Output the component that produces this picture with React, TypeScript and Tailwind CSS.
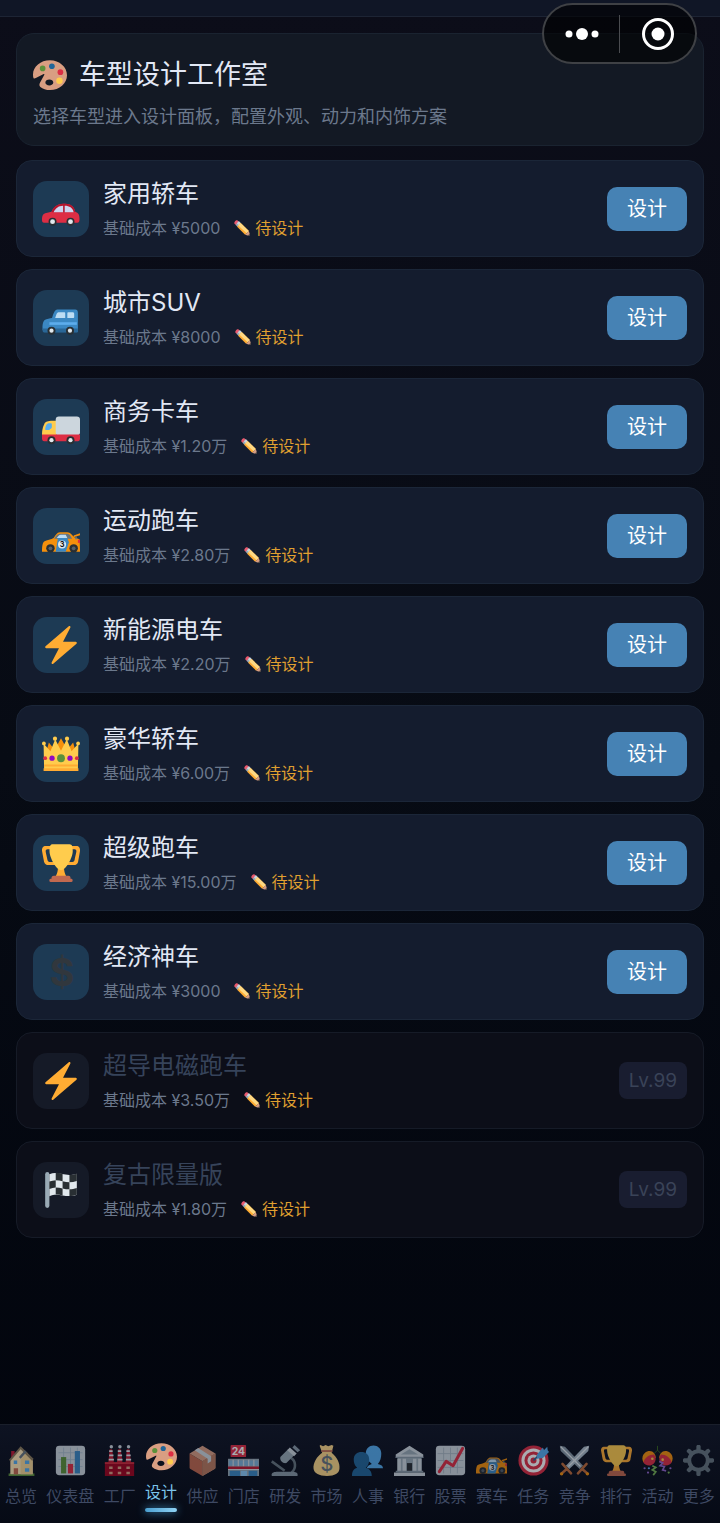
import type { ReactNode } from 'react';

type IconName =
  | 'palette' | 'car' | 'suv' | 'truck' | 'racecar' | 'bolt' | 'crown' | 'trophy' | 'dollar' | 'flag'
  | 'pencil' | 'house' | 'chart' | 'factory' | 'box' | 'shop' | 'microscope' | 'bag' | 'people' | 'bank'
  | 'stock' | 'target' | 'swords' | 'party' | 'gear';

// All icons are drawn on a 36x36 grid
const icons: Record<IconName, ReactNode> = {
  palette: (
    <>
      <path fillRule="evenodd" fill="#D99E82" d="M18 2.500C8 2.500 0 9.300 0 17.500c0 1.500.1 2.700.5 3.600.4 1 1.400.8 2.500.2L11.300 17c.6-.3 1 .1.7.8L7.500 26c-1 1.800-1 3.500.3 4.700 2.400 2 6.200 3.300 10.200 3.300 10 0 18-7 18-15.700S28 2.500 18 2.500zM17.300 22.800c2.300 0 4.200 1.400 4.200 3.100s-1.900 3.200-4.200 3.200-4.200-1.500-4.200-3.200 1.900-3.100 4.200-3.100z" />
      <circle cx="10.200" cy="11" r="3" fill="#5C913B" />
      <circle cx="20" cy="8.700" r="3" fill="#269" />
      <circle cx="29" cy="15" r="3" fill="#DD2E44" />
      <circle cx="28" cy="24" r="3.400" fill="#FFCC4D" />
    </>
  ),
  car: (
    <>
      <path fill="#DD2E44" d="M2 31c-1.500 0-2-1-2-2.500 0-3 .4-5.600 3-6.500 2-.7 4-1 6-1.500C11 16.500 14 13 20 13h2c5.500 0 8.500 3 9.500 7.500 3 .8 4 3 4 6v2c0 1.500-.7 2.500-2 2.500z" />
      <path fill="#B4152D" d="M9 20.500C11 16.500 14 13 20 13h2c5.500 0 8.500 3 9.500 7.500l-1.500.5H10z" />
      <path fill="#CCD6F0" d="M11 21c1.800-3.200 4.300-6 9-6v6zM21.500 15c4.500 0 7.500 2 8.500 6h-8.500z" />
      <circle cx="10" cy="30" r="3.800" fill="#292F33" /><circle cx="27" cy="30" r="3.800" fill="#292F33" />
      <circle cx="10" cy="30" r="2.300" fill="#E1E8ED" /><circle cx="27" cy="30" r="2.300" fill="#E1E8ED" />
    </>
  ),
  suv: (
    <>
      <path fill="#3B88C3" d="M1 30c-1-3-.6-8 1.500-10 2-1.200 5-1.500 7-2 1.500-4.500 2.500-8 5-8h17c1.600 0 2.500 1 2.500 3v17c0 1-.5 1.500-1.500 1.500H3C2 31.500 1.300 31 1 30z" />
      <path fill="#BDDDF4" d="M12.500 18c1-3.300 1.700-5.500 3-5.500H21c.6 0 1 .4 1 1V18zM24 13.500c0-.6.4-1 1-1h4c1 0 1.500.5 1.500 1.500v3c0 .6-.4 1-1 1H24z" />
      <path fill="#5DADEC" d="M7 22h26v2.500H7z" />
      <path fill="#2A6797" d="M0 28h34v3.500H1z" />
      <circle cx="9" cy="30" r="3.800" fill="#292F33" /><circle cx="26.500" cy="30" r="3.800" fill="#292F33" />
      <circle cx="9" cy="30" r="2" fill="#E1E8ED" /><circle cx="26.500" cy="30" r="2" fill="#E1E8ED" />
    </>
  ),
  truck: (
    <>
      <path fill="#FFCC4D" d="M0 25c0-4 1-9 3.500-11.500C5 12 8 12 14 12v14H0z" />
      <path fill="#55ACEE" d="M3 20c.4-2.500 1-5 3-5.500h2.500c.5 0 .8.300.8.8V18c0 1-.6 1.500-1.500 2l-1 .8H3.500c-.4 0-.6-.3-.5-.8z" />
      <rect x="13" y="8" width="23" height="18" rx="3" fill="#CCD6DD" />
      <path fill="#DD2E44" d="M0 25h36v4c0 1.500-.8 2.500-2 2.500H2C.8 31.500 0 30.500 0 29z" />
      <circle cx="9" cy="30.500" r="3.800" fill="#292F33" /><circle cx="27" cy="30.500" r="3.800" fill="#292F33" />
      <circle cx="9" cy="30.500" r="2" fill="#E1E8ED" /><circle cx="27" cy="30.500" r="2" fill="#E1E8ED" />
    </>
  ),
  racecar: (
    <>
      <path fill="#F4900C" d="M0 33c0-4 .3-8.500 2-9.800C4.500 21.800 9 21.500 11 20c2-2.500 3-5.500 6-5.500h7c3 0 5 3.500 7 5l4.500 1.500c.4 3 .5 8 .5 12z" />
      <path fill="#66757F" d="M11.500 20.500c2-2.500 3-4.700 5.500-4.700h7c2 0 3.200 2.400 4.500 4.700z" />
      <path fill="#BDDDF4" d="M14 20c1.400-2 2-3.200 4-3.200h4.500L24 20z" />
      <path fill="#3B88C3" d="M15 20h9l1.500 4-3 9H13z" />
      <path fill="#F4900C" d="M30 17.500l6-2v1.700l-6 2z" />
      <path fill="#66757F" d="M31.500 18.500h1.500V21h-1.500z" />
      <path fill="#DD2E44" d="M34 21.500h2v3h-2z" />
      <circle cx="8" cy="29.700" r="4" fill="#292F33" /><circle cx="30" cy="29.700" r="4" fill="#292F33" />
      <circle cx="8" cy="29.700" r="1.800" fill="#55606A" /><circle cx="30" cy="29.700" r="1.800" fill="#55606A" />
      <circle cx="19" cy="26" r="3.800" fill="#E1E8ED" />
      <text x="19" y="28.500" fontSize="7" fontWeight="700" textAnchor="middle" fill="#14171A">3</text>
    </>
  ),
  bolt: (
    <path fill="#FFAC33" d="M32.938 15.651C32.792 15.260 32.418 15 32 15H19.925L26.890 1.458c.219-.426.106-.947-.271-1.243C26.437.071 26.218 0 26 0c-.233 0-.466.082-.653.243L18 6.588 3.347 19.243c-.316.273-.43.714-.284 1.105S3.582 21 4 21h12.075L9.110 34.542c-.219.426-.106.947.271 1.243.182.144.401.215.619.215.233 0 .466-.082.653-.243L18 29.412l14.653-12.655c.317-.273.43-.714.285-1.106z" />
  ),
  crown: (
    <>
      <path fill="#F4900C" d="M4 16L6.500 7 12 14l6-11 6 11 5.500-7L32 16z" />
      <path fill="#FFCC4D" d="M2 33L1.500 8 8 15.500 12.500 4l5.500 11L23.500 4 28 15.500 34.500 8 34 33z" />
      <path fill="#FFAC33" d="M2 28h32v1.800H2zM1.500 31.500h33V34h-33z" />
      <g fill="#FFCC4D"><circle cx="1.800" cy="8" r="1.800" /><circle cx="12.300" cy="3.500" r="2" /><circle cx="23.700" cy="3.500" r="2" /><circle cx="34.200" cy="8" r="1.800" /></g>
      <circle cx="18" cy="22" r="3.700" fill="#5C913B" />
      <circle cx="9.500" cy="22" r="2.500" fill="#9209C1" /><circle cx="26.500" cy="22" r="2.500" fill="#9209C1" />
      <circle cx="3" cy="22" r="1.800" fill="#DD2E44" /><circle cx="33" cy="22" r="1.800" fill="#DD2E44" />
    </>
  ),
  trophy: (
    <>
      <path fill="#FFAC33" d="M5.123 5h6C12.227 5 13 4.896 13 6V4c0-1.104-.773-2-1.877-2h-8c-2 0-3.583 2.125-3 5 0 0 1.791 9.375 1.917 9.958C2.373 18.500 4.164 20 6.081 20h6.958c1.105 0-.039-1.896-.039-3v-2c0 1.104-.773 2-1.877 2h-4c-1.104 0-1.833-1.042-2-2S3.539 7.667 3.539 7.667C3.206 5.750 4.018 5 5.123 5zm25.812 0h-6C23.831 5 22 4.896 22 6V4c0-1.104 1.831-2 2.935-2h8c2 0 3.584 2.125 3 5 0 0-1.633 9.419-1.771 10-.354 1.500-2.042 3-4 3h-7.146C21.914 20 22 18.104 22 17v-2c0 1.104 1.831 2 2.935 2h4c1.104 0 1.834-1.042 2-2s1.584-7.333 1.584-7.333C32.851 5.750 32.040 5 30.935 5zM20.832 22c0-6.958-2.709 0-2.709 0s-3-6.958-3 0-3.291 10-3.291 10h12.292c-.001 0-3.292-3.042-3.292-10z" />
      <path fill="#FFCC4D" d="M29.123 6.577c0 6.775-6.770 18.192-11 18.192-4.231 0-11-11.417-11-18.192 0-5.195 1-6.319 3-6.319 1.374 0 6.025-.027 8-.027l7-.001c2.917-.001 4 .684 4 6.347z" />
      <path fill="#C1694F" d="M27 33c0 1.104.227 2-.877 2h-16C9.018 35 9 34.104 9 33v-1c0-1.104 1.164-2 2.206-2h13.917c1.042 0 1.877.896 1.877 2v1z" />
      <rect x="7" y="33" width="22" height="3" rx="1.300" fill="#C1694F" />
    </>
  ),
  dollar: <text x="19" y="31" fontSize="36" fontWeight="700" textAnchor="middle" fill="#31373D">$</text>,
  flag: (
    <>
      <rect x="3" y="1" width="4" height="34" rx="2" fill="#99AAB5" />
      <path fill="#E1E8ED" d="M7 3c9-3.500 15 3.500 26-.5v20c-11 4-17-3-26 1.500z" />
      <g fill="#292F33">
        <path d="M13 1.700c2.200 0 4.400.5 6.500 1v7c-2.200-.5-4.300-1-6.500-1zM26 3.700c2.300 0 4.600-.4 7-1.200v7c-2.400.7-4.700 1.200-7 1.200z" />
        <path d="M7 10c2-.8 4-1.200 6-1.300v7c-2 0-4 .5-6 1.400zM19.500 9.700c2.200.6 4.300 1 6.500 1v6.700c-2.200 0-4.300-.4-6.500-.9z" />
        <path d="M13 15.700c2.200 0 4.400.3 6.500.9v6.600c-2.100-.5-4.300-1-6.500-.9zM26 17.400c2.300 0 4.600-.5 7-1.300v6.400c-2.400.9-4.700 1.300-7 1.300z" />
      </g>
    </>
  ),
  pencil: (
    <>
      <path fill="#EA596E" d="M1 8C-.5 5 4-.5 7.500.5L12 5 5 12z" />
      <path fill="#99AAB5" d="M3.500 10.500l7.500-7.500 5 5-8 8z" />
      <path fill="#CCD6DD" d="M6.500 7.500l6.500 6 3-5.500-5-5z" />
      <path fill="#FFAC33" d="M7 15l8-8 18.500 18-8.500 8z" />
      <path fill="#FFD983" d="M9.500 12.500L15 7l18.500 18-5 5z" />
      <path fill="#D99E82" d="M33.500 25l2.500 9.500L34.500 36 25 33z" />
      <path fill="#292F33" d="M35 31.500l1 3-1.500 1.500-3-1z" />
    </>
  ),
  house: (
    <>
      <path fill="#5C913B" d="M3 33h30v3H3z" />
      <path fill="#BB1A34" d="M6 7h4v8H6z" />
      <path fill="#FFE8B6" d="M5 17L17 3l14 14v17H5z" />
      <path fill="#F5D595" d="M17 17l7-9 7 9v17H17z" />
      <path fill="#8A7A5C" d="M17 1.500L32 16l-1.500 2.500L17 5 5 19l-1.500-2z" />
      <path fill="#66757F" d="M15 14l7-8 2 2-7 8z" />
      <path fill="#55ACEE" d="M9 18h4v4H9zM22 18h5v4h-5zM22 27h5v4h-5z" />
      <path fill="#C1694F" d="M9 27h5v7H9z" />
    </>
  ),
  chart: (
    <>
      <rect x="1" y="1" width="34" height="34" rx="4" fill="#CCD6DD" />
      <path stroke="#A5BBCB" strokeWidth="1" fill="none" d="M4 9h28M4 17h28M4 25h28M10 3v30M18 3v30M26 3v30" />
      <path fill="#5C913B" d="M7 14h6v19H7z" /><path fill="#DD2E44" d="M15 22h6v11h-6z" /><path fill="#3B88C3" d="M23 7h6v26h-6z" />
    </>
  ),
  factory: (
    <>
      <path fill="#BE1931" d="M6.500 5h3l2 16H5zM16.500 5h3l2 16H15zM26.500 5h3l2 16H25z" />
      <path stroke="#E1E8ED" strokeWidth="2" d="M6 7h4M6 12h5M5.500 17h6M16 7h4M16 12h5M15.500 17h6M26 7h4M26 12h5M25.500 17h6" />
      <g fill="#CCD6DD"><circle cx="8.500" cy="2" r="2" /><circle cx="18.500" cy="2" r="2" /><circle cx="28.500" cy="2" r="2" /></g>
      <path fill="#A0041E" d="M1 20h34v16H1z" /><path fill="#D32F3F" d="M1 20h34v2H1z" />
      <path fill="#D99E82" d="M6 25h4v3H6zM16 25h4v3h-4zM26 25h4v3h-4zM6 31h4v3H6zM16 31h4v3h-4zM26 31h4v3h-4z" />
    </>
  ),
  box: (
    <>
      <path fill="#C1694F" d="M3 10l15 9v17L4 28c-.6-.4-1-1-1-2z" />
      <path fill="#D99E82" d="M33 10l-15 9v17l14-8c.6-.4 1-1 1-2z" />
      <path fill="#D99E82" d="M3 10L18 1l15 9-15 9z" />
      <path fill="#B97A5F" d="M33 10l-15 9v17l14-8c.6-.4 1-1 1-2z" />
      <path fill="#CCD6DD" d="M9 6l4-2.500L28 13v6l-4 2.500V16z" />
    </>
  ),
  shop: (
    <>
      <rect x="3" width="18" height="14" rx="1" fill="#DD2E44" />
      <text x="12" y="11.500" fontSize="12" fontWeight="700" textAnchor="middle" fill="#fff">24</text>
      <path fill="#99AAB5" d="M0 16h36v20H0z" /><path fill="#7FB2D9" d="M1 18h34v6H1z" />
      <path stroke="#CCD6DD" strokeWidth="1.500" d="M6 17v8M12 17v8M18 17v8M24 17v8M30 17v8" />
      <path fill="#BE1931" d="M0 25h36v3H0z" /><path fill="#E1E8ED" d="M0 28h36v1H0z" />
      <path fill="#3B88C3" d="M2 30h12v6H2zM24 30h10v6H24z" /><path fill="#8CCAF7" d="M15 30h7v6h-7z" />
    </>
  ),
  microscope: (
    <>
      <path fill="none" stroke="#66757F" strokeWidth="3" d="M24 15c6 3 7 12 1 17" />
      <path fill="#8899A6" d="M2 34c0-2 3-3 7-3h17c4 0 6 1 6 3v2H2z" />
      <path stroke="#66757F" strokeWidth="3" d="M2 19l15 11" />
      <path fill="#99AAB5" d="M12 14l9-9 7 7-9 9c-4 1-8-3-7-7z" />
      <path fill="#CCD6DD" d="M20 6l3-3 8 7-3 3z" />
      <path fill="#8899A6" d="M26 3l2.500-3L35 6l-3 2.500z" />
    </>
  ),
  bag: (
    <>
      <path fill="#FDD888" d="M11 0l3 1.500L17 0l3 1.500L24 0l2 1-2 8c6 5 10 12 9 19-.6 5-5 8-14.500 8S4 33 3 28C2 21 7 13 13 9L10 1z" />
      <path fill="#BF6952" d="M12 6h13v2H12z" />
      <text x="18.500" y="30" fontSize="23" fontWeight="500" textAnchor="middle" fill="#67757F">$</text>
    </>
  ),
  people: (
    <>
      <path fill="#55ACEE" d="M17 27c1-3 3-4 6-5-4-3-7-7-7-12 0-6 4-9.500 9-9.500s9 3.500 9 9.500c0 5-1 9-4 12 4 1 6 2 6 5z" />
      <path fill="#269" d="M0 36c0-6 2-8 6-9.500C3 24 2 20 2 17c0-6 4-9 9-9s9 3 9 9c0 3-1 7-4 9.500 4 1.500 7 3.500 7 9.500z" />
    </>
  ),
  bank: (
    <>
      <path fill="#CCD6DD" d="M2 11L18 1l16 10v4H2zM0 32h36v4H0z" />
      <path fill="#99AAB5" d="M8 11l10-6 10 6zM4 15h28v17H4z" />
      <path fill="#292F33" d="M15 21h6v10h-6z" />
      <path fill="#CCD6DD" d="M4 16h4v15H4zM10 16h4v15h-4zM22 16h4v15h-4zM28 16h4v15h-4z" />
      <path fill="#8899A6" d="M2 30h32v2H2zM2 13.500h32V15H2z" />
    </>
  ),
  stock: (
    <>
      <rect x="1" y="1" width="34" height="34" rx="4" fill="#CCD6DD" />
      <path stroke="#A5B5C0" strokeWidth="1" d="M3 10h30M3 18h30M3 26h30M10 3v30M18 3v30M26 3v30" />
      <path fill="none" stroke="#DD2E44" strokeWidth="3.500" strokeLinejoin="round" strokeLinecap="round" d="M5 31l8-12 8 5L32 4" />
    </>
  ),
  target: (
    <>
      <circle cx="18" cy="18" r="17.500" fill="#DD2E44" /><circle cx="18" cy="18" r="14" fill="#fff" />
      <circle cx="18" cy="18" r="10.500" fill="#DD2E44" /><circle cx="18" cy="18" r="7" fill="#fff" /><circle cx="18" cy="18" r="3.500" fill="#DD2E44" />
      <path stroke="#269" strokeWidth="2" d="M18 18L30 6" />
      <path fill="#55ACEE" d="M22 11l7-8 1 3 4-4 .5 4L36 8l-7 7-7 1z" />
    </>
  ),
  swords: (
    <>
      <path fill="#8899A6" d="M1 1l6 1 21 22-4 4L2 7z" /><path fill="#AABBC8" d="M35 1l-6 1L8 24l4 4L34 7z" />
      <path stroke="#E1E8ED" strokeWidth="1.500" d="M2 2l23 23M34 2L11 25" />
      <path fill="none" stroke="#BE6B3A" strokeWidth="3" strokeLinecap="round" d="M4 22l10 11M32 22L22 33M9 28l-6 5M27 28l6 5" />
      <circle cx="3" cy="33.500" r="2" fill="#F4900C" /><circle cx="33" cy="33.500" r="2" fill="#F4900C" />
    </>
  ),
  party: (
    <>
      <path stroke="#3E721D" strokeWidth="1" fill="none" d="M18 1v5l-4 4M18 6l4 4" />
      <path fill="#F4900C" d="M1.500 20C-2 12 4 7 9 7c4 0 7 4 7 8z" /><path fill="#DD2E44" d="M1.500 20C3 15 8 11 14 11c4 5 1 11-3.500 12.500-4 1-8-1-9-3.500z" />
      <path fill="#F4900C" d="M34.500 20C38 12 32 7 27 7c-4 0-7 4-7 8z" /><path fill="#DD2E44" d="M34.500 20C33 15 28 11 22 11c-4 5-1 11 3.500 12.500 4 1 8-1 9-3.500z" />
      <circle cx="12" cy="16" r="1.500" fill="#FFCC4D" /><circle cx="24" cy="17" r="1.500" fill="#FFCC4D" />
      <path fill="none" stroke="#77B255" strokeWidth="2" d="M12 24l4 2-4 3 4 2-3 4" />
      <path fill="none" stroke="#9266CC" strokeWidth="2" d="M20 19l4 2-3 3 5 1-2 4 4 1" />
      <g fill="#9266CC"><circle cx="3" cy="27" r="1.300" /><circle cx="7" cy="32" r="1.300" /><circle cx="33" cy="27" r="1.300" /></g>
      <circle cx="8" cy="27" r="1.300" fill="#55ACEE" /><circle cx="31" cy="32" r="1.300" fill="#77B255" />
    </>
  ),
  gear: (
    <g fill="#66757F">
      {[0, 45, 90, 135, 180, 225, 270, 315].map((angle) => (
        <path key={angle} transform={`rotate(${angle} 18 18)`} d="M15.500 6.500V2c0-1.200.8-2 1.500-2h2c.7 0 1.500.8 1.500 2v4.500z" />
      ))}
      <path fillRule="evenodd" d="M18 5a13 13 0 100 26 13 13 0 000-26zm0 4.500a8.500 8.500 0 110 17 8.500 8.500 0 010-17z" />
    </g>
  ),
};

function Icon({ name, className }: { name: IconName; className: string }) {
  return (
    <svg viewBox="0 0 36 36" className={`shrink-0 overflow-visible ${className}`} aria-hidden="true">
      {icons[name]}
    </svg>
  );
}

type CarModel = {
  name: string;
  cost: string;
  icon: IconName;
  level?: number;
};

const models: CarModel[] = [
  { name: '家用轿车', cost: '¥5000', icon: 'car' },
  { name: '城市SUV', cost: '¥8000', icon: 'suv' },
  { name: '商务卡车', cost: '¥1.20万', icon: 'truck' },
  { name: '运动跑车', cost: '¥2.80万', icon: 'racecar' },
  { name: '新能源电车', cost: '¥2.20万', icon: 'bolt' },
  { name: '豪华轿车', cost: '¥6.00万', icon: 'crown' },
  { name: '超级跑车', cost: '¥15.00万', icon: 'trophy' },
  { name: '经济神车', cost: '¥3000', icon: 'dollar' },
  { name: '超导电磁跑车', cost: '¥3.50万', icon: 'bolt', level: 99 },
  { name: '复古限量版', cost: '¥1.80万', icon: 'flag', level: 99 },
];

const tabs: { label: string; icon: IconName }[] = [
  { label: '总览', icon: 'house' },
  { label: '仪表盘', icon: 'chart' },
  { label: '工厂', icon: 'factory' },
  { label: '设计', icon: 'palette' },
  { label: '供应', icon: 'box' },
  { label: '门店', icon: 'shop' },
  { label: '研发', icon: 'microscope' },
  { label: '市场', icon: 'bag' },
  { label: '人事', icon: 'people' },
  { label: '银行', icon: 'bank' },
  { label: '股票', icon: 'stock' },
  { label: '赛车', icon: 'racecar' },
  { label: '任务', icon: 'target' },
  { label: '竞争', icon: 'swords' },
  { label: '排行', icon: 'trophy' },
  { label: '活动', icon: 'party' },
  { label: '更多', icon: 'gear' },
];

function ModelCard({ model }: { model: CarModel }) {
  const locked = model.level !== undefined;

  return (
    <li
      className={`flex items-center gap-3.5 rounded-2xl border p-4 ${
        locked ? 'border-[#161b27] bg-[#0c0e18]' : 'border-[#1b2638] bg-[#141c2e]'
      }`}
    >
      <div className={`flex size-14 shrink-0 items-center justify-center rounded-[14px] ${locked ? 'bg-[#151a27]' : 'bg-[#1d3a54]'}`}>
        <Icon name={model.icon} className="size-[38px]" />
      </div>
      <div className="min-w-0 flex-1">
        <h2 className={`mb-1.5 text-2xl leading-[33px] ${locked ? 'text-[#36435a]' : 'text-[#e2e8f5]'}`}>{model.name}</h2>
        <div className="flex items-center gap-3.5 text-base leading-6">
          <span className="text-[#6b788c]">基础成本 {model.cost}</span>
          <span className="flex items-center gap-[5px] text-[#e0a030]">
            <Icon name="pencil" className="size-4" />
            待设计
          </span>
        </div>
      </div>
      {locked ? (
        <span className="rounded-lg bg-[#191d30] px-2.5 py-1 text-[19px] leading-[29px] text-[#3a4358]">Lv.{model.level}</span>
      ) : (
        <button type="button" className="rounded-[10px] bg-[#4682b4] px-5 py-2 text-xl leading-7 text-white">
          设计
        </button>
      )}
    </li>
  );
}

export default function App() {
  return (
    <div className="flex min-h-screen flex-col bg-linear-to-b from-[#0c0d19] via-[#070b14] to-[#02050d] font-['Inter','Noto_Sans_CJK_SC',sans-serif]">
      <header className="h-[17px] border-b border-[#1d2434] bg-[#101626]" />

      {/* Mini program capsule */}
      <div className="absolute top-[3px] right-[23px] flex h-[61px] w-[155px] items-center rounded-full border-2 border-[#3f4145] bg-black/60">
        <button type="button" aria-label="菜单" className="flex flex-1 justify-center">
          <svg viewBox="0 0 34 12" className="h-3 w-[34px]" fill="#fff">
            <circle cx="4" cy="6" r="3.500" />
            <circle cx="17" cy="6" r="6" />
            <circle cx="30" cy="6" r="3.500" />
          </svg>
        </button>
        <span className="h-[38px] w-px bg-[#4a4c50]" />
        <button type="button" aria-label="关闭" className="flex flex-1 justify-center">
          <svg viewBox="0 0 32 32" className="size-8">
            <circle cx="16" cy="16" r="14.500" fill="none" stroke="#fff" strokeWidth="3" />
            <circle cx="16" cy="16" r="6.500" fill="#fff" />
          </svg>
        </button>
      </div>

      <main className="flex flex-1 flex-col gap-3.5 p-4">
        <section className="rounded-[18px] border border-[#1a2330] bg-[#131924] px-4 pt-[21px] pb-3.5">
          <h1 className="mb-2 flex items-center gap-3 text-[27px] leading-10 text-[#e2e8f5]">
            <Icon name="palette" className="size-[34px]" />
            车型设计工作室
          </h1>
          <p className="text-lg leading-7 text-[#6b788c]">选择车型进入设计面板，配置外观、动力和内饰方案</p>
        </section>

        {/* Car models */}
        <ul className="flex flex-col gap-3">
          {models.map((model) => (
            <ModelCard key={model.name} model={model} />
          ))}
        </ul>
      </main>

      {/* Bottom tabs */}
      <nav className="flex justify-between border-t border-[#1a1f2b] bg-linear-to-b from-[#0e1322] to-[#060a15] px-[5px] pt-5 pb-[15px]">
        {tabs.map((tab) => {
          const active = tab.label === '设计';
          return (
            <button
              key={tab.label}
              type="button"
              aria-current={active ? 'page' : undefined}
              className={`relative flex flex-col items-center gap-2 text-base leading-6 whitespace-nowrap ${
                active ? '-translate-y-1 text-[#7cc4ea]' : 'text-[#3e4963]'
              }`}
            >
              <Icon name={tab.icon} className={active ? 'size-[31px]' : 'size-[31px] opacity-65'} />
              {tab.label}
              {active && (
                <span className="absolute inset-x-0 -bottom-2 h-1 rounded-full bg-linear-to-r from-[#4a9fd0] to-[#8fd3f5] shadow-[0_0_8px_#3f8fc0]" />
              )}
            </button>
          );
        })}
      </nav>
    </div>
  );
}
